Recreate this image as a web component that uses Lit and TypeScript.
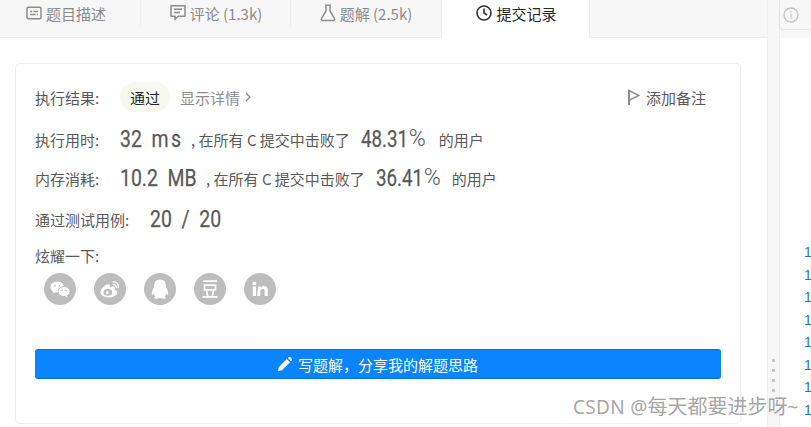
import { LitElement, html, css, svg } from "lit";
import { customElement } from "lit/decorators.js";

const tabIcons = {
  desc: svg`<svg width="16" height="16" viewBox="0 0 16 16" fill="none" stroke="#8c8c8c" stroke-width="1.5"><rect x="1" y="2.2" width="14" height="11.6" rx="1.5"/><path d="M4 6.500h2.200M7.500 6.500h4.500M4 9.500h5.500M10.800 9.500H12"/></svg>`,
  comment: svg`<svg width="16" height="18" viewBox="0 0 16 18" fill="none" stroke="#8c8c8c" stroke-width="1.5"><path d="M1 1.800h14v10.400H8.200L5 15.600v-3.400H1z" stroke-linejoin="round"/><path d="M4 5.200h8M4 8.400h6"/></svg>`,
  flask: svg`<svg width="16" height="18" viewBox="0 0 16 18" fill="none" stroke="#8c8c8c" stroke-width="1.5"><path d="M5 1.200h6M6 1.200v5.600L1.600 14.400c-.6 1.100 0 2.100 1.200 2.100h10.400c1.200 0 1.800-1 1.200-2.100L10 6.800V1.200" stroke-linejoin="round"/></svg>`,
  clock: svg`<svg width="16" height="16" viewBox="0 0 16 16" fill="none" stroke="#333" stroke-width="1.6"><circle cx="8" cy="8" r="7"/><path d="M8 3.600V8l3 2"/></svg>`,
};

const shareIcons = [
  svg`<svg viewBox="0 0 32 32" width="32" height="32"><circle cx="16" cy="16" r="16" fill="#bdbdbd"/><ellipse cx="13.200" cy="14" rx="6.800" ry="5.600" fill="#fff"/><path d="M9.500 18l-.6 2.600 3-1.600z" fill="#fff"/><ellipse cx="20" cy="18.600" rx="6" ry="5" fill="#fff" stroke="#bdbdbd" stroke-width="1"/><path d="M23 22.600l.9 2-2.600-1.200z" fill="#fff"/><circle cx="11" cy="12.800" r=".9" fill="#bdbdbd"/><circle cx="15.400" cy="12.800" r=".9" fill="#bdbdbd"/><circle cx="18" cy="17.400" r=".7" fill="#bdbdbd"/><circle cx="22" cy="17.400" r=".7" fill="#bdbdbd"/></svg>`,
  svg`<svg viewBox="0 0 32 32" width="32" height="32"><circle cx="16" cy="16" r="16" fill="#bdbdbd"/><path d="M14.400 24.400c-4.200 0-7.900-2-7.900-5.100 0-3.300 4.700-8 7.700-8 1.900 0 2.100 1.500 1.700 3 1.900-.8 5.200-1.400 5.200 1 .1.500-.2 1-.5 1.400 1.700.5 2.500 1.500 2.500 2.800 0 2.700-3.800 4.900-8.700 4.900z" fill="#fff"/><ellipse cx="13.800" cy="19.400" rx="4.300" ry="3.300" fill="#bdbdbd"/><circle cx="13.300" cy="19.600" r="1.500" fill="#fff"/><path d="M19 8.800c3.300-.6 6.100 2.300 5.200 5.700M19.600 11.500c1.600-.3 3 1.100 2.600 2.700" fill="none" stroke="#fff" stroke-width="1.400" stroke-linecap="round"/></svg>`,
  svg`<svg viewBox="0 0 32 32" width="32" height="32"><circle cx="16" cy="16" r="16" fill="#bdbdbd"/><path d="M16 6.500c-3.900 0-5.900 2.900-5.900 6.300 0 1-.1 1.700-.8 2.900-1 1.600-2 3.800-1.500 5.900.5.900 1.500-.5 1.900-1.200.3 1.300 1 2.300 1.800 3-.9.400-1.700 1-1.400 1.700.4.700 2.700.7 4 .5.700-.2 1.200-.5 1.900-.5s1.200.3 1.900.5c1.300.2 3.600.2 4-.5.300-.7-.5-1.300-1.400-1.700.8-.7 1.500-1.700 1.800-3 .4.700 1.400 2.100 1.900 1.200.5-2.100-.5-4.300-1.500-5.900-.7-1.200-.8-1.900-.8-2.900 0-3.400-2-6.300-5.900-6.300z" fill="#fff"/></svg>`,
  svg`<svg viewBox="0 0 32 32" width="32" height="32"><circle cx="16" cy="16" r="16" fill="#bdbdbd"/><path d="M9 8.200h14M10.500 12.200h11v4.600h-11zM8.500 23.800h15M12.600 18.200l1.200 5M19.400 18.200l-1.200 5" fill="none" stroke="#fff" stroke-width="1.700"/></svg>`,
  svg`<svg viewBox="0 0 32 32" width="32" height="32"><circle cx="16" cy="16" r="16" fill="#bdbdbd"/><circle cx="10.400" cy="10.400" r="1.900" fill="#fff"/><path d="M8.800 13.400H12V23H8.800zM14.100 13.400h3v1.400c.6-1 1.700-1.700 3.100-1.700 2.800 0 3.600 1.800 3.600 4.600V23h-3.200v-4.900c0-1.400-.4-2.300-1.500-2.300-1.300 0-2.800.9-2.800 2.400V23h-3.200z" fill="#fff"/></svg>`,
];

const num = (text: unknown, width: number, loose = false) =>
  html`<span class="num" style="width:${width}px"><span class="squeeze ${loose ? "loose" : ""}">${text}</span></span>`;

@customElement("app-root")
export class AppRoot extends LitElement {
  static styles = css`
    :host {
      display: block;
      width: 811px;
      height: 427px;
      overflow: hidden;
      position: relative;
      font-family: "Noto Sans CJK SC", "Noto Sans", sans-serif;
      font-size: 15px;
      color: #595959;
      background: #f7f7f7;
    }
    .page { display: grid; grid-template-columns: 767px 13px 31px; height: 427px; }
    .left { display: flex; flex-direction: column; min-width: 0; }
    .tabs { display: flex; height: 37px; flex: none; border-bottom: 1px solid #eee; margin-left: -9px; width: 776px; }
    .tab {
      width: 150px; flex: none; height: 37px; box-sizing: border-box;
      display: flex; align-items: center; justify-content: center; gap: 4px;
      color: #8c8c8c; padding-bottom: 11px;
      white-space: nowrap;
    }
    .sep { border-right: 1px solid #efefef; height: 27px; width: 0; flex: none; margin-left: -1px; }
    .tab.active { background: #fff; color: #262626; width: 149px; height: 38px; margin-bottom: -1px; z-index: 1; border-left: 1px solid #eee; border-right: 1px solid #eee; padding: 0 0 12px 2px; }
    .panel { flex: 1; background: #fff; padding: 25px 26px 0 15px; display: flex; flex-direction: column; }
    .card {
      height: 361px; box-sizing: border-box; border: 1px solid #eeeeee; border-radius: 5px;
      padding: 0 19px; display: flex; flex-direction: column;
    }
    .row { display: flex; align-items: center; white-space: nowrap; }
    .r1 { height: 30px; margin-top: 18px; }
    .r2 { height: 30px; margin-top: 12px; }
    .r3 { height: 30px; margin-top: 9px; }
    .r4 { height: 30px; margin-top: 11px; }
    .label { width: 85px; flex: none; }
    .label.wide { width: 115px; }
    .pill { background: #f7f9f1; color: #262626; border-radius: 15px; width: 50px; height: 30px; display: flex; align-items: center; justify-content: center; }
    .detail { color: #8c8c8c; margin-left: 10px; display: flex; align-items: center; gap: 5px; }
    .note { margin-left: auto; margin-right: 15px; display: flex; align-items: center; gap: 6px; color: #595959; }
    .num { display: inline-block; flex: none; height: 30px; line-height: 30px; font-family: Roboto, sans-serif; font-size: 24px; color: #595959; }
    .squeeze { display: inline-block; transform: scaleX(.78); transform-origin: left center; word-spacing: 6px; -webkit-text-stroke: .25px #595959; }
    .squeeze.loose { transform: scaleX(.81); }
    .ms { letter-spacing: 3px; }
    .mid { margin: 0 11px 0 10px; }
    .tail { margin-left: 11px; }
    .tail.tight { margin-left: 9px; }
    .pct { font-family: Roboto, sans-serif; font-weight: 300; font-size: 23px; line-height: 30px; width: 19px; flex: none; }
    .brag { margin-top: 11px; height: 22px; line-height: 22px; }
    .icons { display: flex; gap: 18px; padding-left: 9px; margin-top: 6px; }
    .icons svg { display: block; }
    .btn {
      margin-top: 44px; height: 30px; box-sizing: border-box; background: #0a84ff; color: #fff;
      border-radius: 3px; display: flex; align-items: center; justify-content: center; gap: 6px;
      border: 1px solid #0a84ff; border-top-color: #0b74dd; border-bottom-color: #0970da;
    }
    .gutter { background: #f7f7f7; display: flex; flex-direction: column; align-items: center; gap: 7px; padding-top: 359px; box-sizing: border-box; border-right: 1px solid #eee; border-left: 1px solid #eee; }
    .gutter i { width: 3px; height: 3px; background: #c8c8c8; display: block; flex: none; }
    .right { display: flex; flex-direction: column; min-width: 0; }
    .info { height: 30px; width: 40px; box-sizing: border-box; margin-left: -1px; border: 1px solid #e4e4e4; border-top: none; border-right: none; border-bottom-left-radius: 4px; display: flex; align-items: center; justify-content: center; padding-right: 18px; }
    .code { background: #fff; margin-top: 8px; flex: 1; padding: 203px 0 0 24px; font-family: "Liberation Sans", sans-serif; font-size: 14px; color: #1a7bb0; overflow: hidden; }
    .code div { height: 22.500px; line-height: 22.500px; }
    .mark { position: absolute; left: 573px; top: 392px; font-size: 20px; line-height: 28px; color: rgba(120,120,120,.68); font-family: "Noto Sans CJK SC", sans-serif; white-space: nowrap; z-index: 2; }
    .mark span { font-size: 19px; font-family: "Noto Sans", sans-serif; letter-spacing: .3px; }
  `;

  render() {
    return html`
      <div class="page">
        <div class="left">
          <div class="tabs">
            <div class="tab">${tabIcons.desc}<span>题目描述</span></div>
            <div class="sep"></div>
            <div class="tab">${tabIcons.comment}<span>评论 (1.3k)</span></div>
            <div class="sep"></div>
            <div class="tab">${tabIcons.flask}<span>题解 (2.5k)</span></div>
            <div class="tab active">${tabIcons.clock}<span>提交记录</span></div>
          </div>
          <div class="panel">
            <div class="card">
              <div class="row r1">
                <span class="label">执行结果:</span>
                <span class="pill">通过</span>
                <span class="detail">显示详情
                  <svg width="6" height="10" viewBox="0 0 6 10" fill="none" stroke="#8c8c8c" stroke-width="1.300"><path d="M1 1l4 4-4 4"/></svg>
                </span>
                <span class="note">
                  <svg width="12" height="16" viewBox="0 0 12 16" fill="none" stroke="#8c8c8c"><path d="M1 16V1.500L11 6.500 1.500 11" stroke-width="1.500"/><path d="M1 16V1" stroke-width="2"/></svg>
                  添加备注
                </span>
              </div>
              <div class="row r2">
                <span class="label">执行用时:</span>
                ${num(html`32 <span class="ms">ms</span>`, 61, true)}
                <span class="mid">, 在所有 C 提交中击败了</span>
                ${num("48.31", 48)}<span class="pct">%</span>
                <span class="tail">的用户</span>
              </div>
              <div class="row r3">
                <span class="label">内存消耗:</span>
                ${num("10.2 MB", 76, true)}
                <span class="mid">, 在所有 C 提交中击败了</span>
                ${num("36.41", 48)}<span class="pct">%</span>
                <span class="tail tight">的用户</span>
              </div>
              <div class="row r4">
                <span class="label wide">通过测试用例:</span>
                ${num("20 / 20", 71, true)}
              </div>
              <div class="brag">炫耀一下:</div>
              <div class="icons">${shareIcons}</div>
              <div class="btn">
                <svg width="14" height="14" viewBox="0 0 14 14" fill="#fff"><path d="M0 14l.8-4L8.800 2l3.200 3.200-8 8zM9.800 1l1-1c.4-.3 1-.3 1.300 0l1.900 1.900c.3.300.3.900 0 1.300l-1 1z"/></svg>
                <span>写题解，分享我的解题思路</span>
              </div>
            </div>
          </div>
        </div>
        <div class="gutter"><i></i><i></i><i></i><i></i></div>
        <div class="right">
          <div class="info">
            <svg width="16" height="16" viewBox="0 0 16 16" fill="none" stroke="#c4c4c4" stroke-width="1.300"><circle cx="8" cy="8" r="7"/><path d="M8 7v4.500M8 4.200v1.300"/></svg>
          </div>
          <div class="code">
            ${[1, 1, 1, 1, 1, 1, 1, 1].map((n) => html`<div>${n}</div>`)}
          </div>
        </div>
      </div>
      <div class="mark"><span>CSDN @</span>每天都要进步呀<span>~</span></div>
    `;
  }
}
